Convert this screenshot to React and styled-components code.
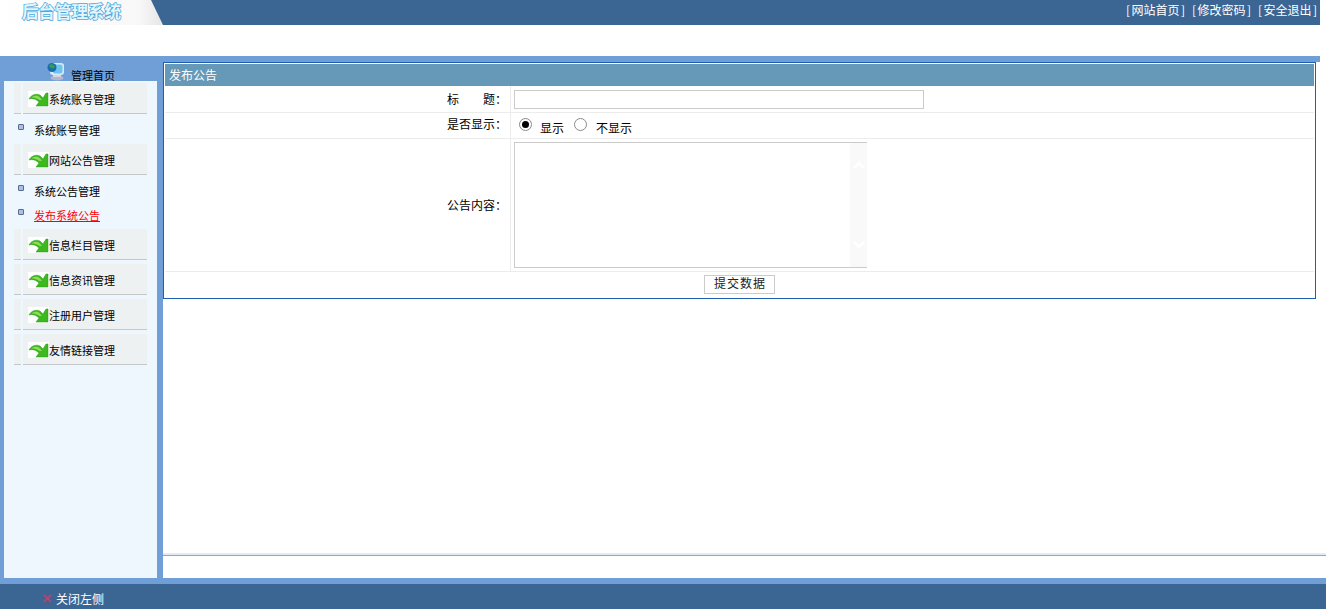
import React from 'react';
import styled, { createGlobalStyle } from 'styled-components';

const Global = createGlobalStyle`
  html, body { margin: 0; padding: 0; background: #fff; }
  body { font-family: "Noto Sans CJK SC", "Liberation Sans", sans-serif; font-size: 12px; color: #000; }
  #root { width: 1326px; height: 609px; overflow: hidden; }
`;

const Page = styled.div`
  width: 1326px;
  height: 609px;
  display: flex;
  flex-direction: column;
  background: #fff;
`;
const TopBar = styled.header`
  width: 1320px;
  height: 25px;
  background: #3b6693;
  display: flex;
  justify-content: space-between;
  align-items: center;
  flex: none;
`;
const LogoPlate = styled.div`
  width: 163px;
  height: 25px;
  background: linear-gradient(90deg, #ffffff 0%, #f8f8f8 85%, #e6e6e6 100%);
  clip-path: polygon(0 0, 151px 0, 163px 25px, 0 25px);
  display: flex;
  align-items: center;
  padding-left: 22px;
  box-sizing: border-box;
`;
const LogoText = styled.span`
  font-size: 16.5px;
  font-weight: 700;
  line-height: 22px;
  margin-top: -4px;
  color: #e4f5fd;
  -webkit-text-stroke: 1.5px #4aa8dc;
  paint-order: stroke;
  white-space: nowrap;
`;
const TopLinks = styled.nav`
  display: flex;
  gap: 7px;
  padding-right: 3px;
  color: #fff;
  font-size: 12px;
  line-height: 20px;
  margin-top: -6px;
`;
const TopLink = styled.a`
  display: flex;
  justify-content: space-between;
  width: 59px;
`;
const Spacer = styled.div`
  height: 31px;
  flex: none;
`;
const Strip = styled.div`
  width: 1320px;
  height: 6px;
  background: #6f9fd6;
  flex: none;
`;
const Frame = styled.div`
  flex: 1;
  display: flex;
  min-height: 0;
`;
const Side = styled.aside`
  width: 163px;
  flex: none;
  display: flex;
  flex-direction: column;
  background: #6f9fd6;
`;
const HomeRow = styled.div`
  height: 19px;
  display: flex;
  align-items: flex-start;
  padding-left: 47px;
  gap: 6px;
  flex: none;
`;
const HomeLabel = styled.span`
  line-height: 13px;
  margin-top: 7px;
  font-size: 11px;
`;
const SidePanel = styled.div`
  flex: 1;
  margin: 0 6px 0 4px;
  background: #eef6fe;
`;
const MenuHead = styled.div`
  margin: ${p => p.$top}px 10px 0 10px;
  height: 31px;
  display: flex;
  gap: 2px;
  box-sizing: border-box;
`;
const MenuNotch = styled.div`
  width: 7px;
  background: #edf1f2;
  border-bottom: 1px solid #c4c8ca;
`;
const MenuBody = styled.div`
  flex: 1;
  background: #edf1f2;
  border-bottom: 1px solid #c4c8ca;
  display: flex;
  align-items: center;
  padding: 1px 0 0 5px;
  font-size: 11px;
`;
const ArrowBox = styled.span`
  width: 21px;
  height: 16px;
  background: #fff;
  display: inline-flex;
  flex: none;
`;
const SubItem = styled.a`
  display: flex;
  align-items: flex-start;
  margin-left: 14px;
  height: 24px;
  font-size: 11px;
  line-height: 14px;
  color: ${p => (p.$active ? '#f00' : '#000')};
  text-decoration: ${p => (p.$active ? 'underline' : 'none')};
`;
const Bullet = styled.i`
  width: 6px;
  height: 6px;
  box-sizing: border-box;
  margin-top: 1px;
  margin-right: 10px;
  border-radius: 1px;
  border: 1px solid #5b6b86;
  background: #a9bfee;
  flex: none;
`;
const SubList = styled.div`
  padding-top: 9px;
`;
const Content = styled.main`
  flex: 1;
  background: #fff;
  display: flex;
  flex-direction: column;
  min-width: 0;
`;
const Box = styled.section`
  margin-right: 10px;
  border: 1px solid #1e5fb4;
  height: 237px;
  box-sizing: border-box;
  padding: 1px;
  display: flex;
  flex-direction: column;
  flex: none;
`;
const BoxTitle = styled.div`
  height: 22px;
  background: #6699b8;
  color: #fff;
  font-size: 12px;
  line-height: 22px;
  padding-left: 4px;
  flex: none;
`;
const Row = styled.div`
  height: ${p => p.$h}px;
  display: flex;
  border-bottom: 1px solid #ececec;
  flex: none;
  box-sizing: border-box;
`;
const Label = styled.div`
  width: 346px;
  padding: 0 3px ${p => p.$lift || 0}px 0;
  box-sizing: border-box;
  font-size: 12px;
  line-height: 1;
  border-right: 1px solid #ececec;
  display: flex;
  align-items: center;
  justify-content: flex-end;
  white-space: pre;
  flex: none;
`;
const Value = styled.div`
  flex: 1;
  padding-left: 3px;
  display: flex;
  align-items: center;
`;
const TitleInput = styled.input`
  width: 410px;
  height: 19px;
  box-sizing: border-box;
  border: 1px solid #cbcbcb;
  padding: 0;
  background: #fff;
`;
const RadioWrap = styled.span`
  display: inline-flex;
  align-items: center;
  gap: ${p => p.$gap}px;
  margin-left: ${p => p.$left}px;
  font-size: 12px;
`;
const RadioDot = styled.span`
  width: 13px;
  height: 13px;
  box-sizing: border-box;
  border-radius: 50%;
  border: 1px solid #8a8a8a;
  background: #fff;
  display: inline-flex;
  align-items: center;
  justify-content: center;
  margin-top: -3px;
  &::after {
    content: '';
    width: 7px;
    height: 7px;
    border-radius: 50%;
    background: ${p => (p.$on ? '#000' : 'transparent')};
  }
`;
const RadioLabel = styled.span`
  line-height: 16px;
  margin-top: 4px;
`;
const AreaBox = styled.div`
  width: 353px;
  height: 126px;
  box-sizing: border-box;
  border-top: 1px solid #cbcbcb;
  border-bottom: 1px solid #cbcbcb;
  border-left: 1px solid #cbcbcb;
  display: flex;
  background: #fff;
`;
const AreaFill = styled.div`
  flex: 1;
`;
const ScrollTrack = styled.div`
  width: 17px;
  background: #f9f9f9;
  display: flex;
  flex-direction: column;
  justify-content: space-between;
  align-items: center;
  padding: 18px 0;
  box-sizing: border-box;
`;
const ButtonRow = styled.div`
  flex: 1;
  display: flex;
  justify-content: center;
  align-items: center;
  padding-right: 1px;
`;
const Submit = styled.button`
  width: 71px;
  height: 19px;
  box-sizing: border-box;
  border: 1px solid #cbcbcb;
  background: #fff;
  font: 12px/1 "Noto Sans CJK SC", sans-serif;
  letter-spacing: 1px;
  padding: 0 0 3px 2px;
  color: #222;
`;
const ContentFill = styled.div`
  flex: 1;
`;
const Rule = styled.div`
  height: 3px;
  background: linear-gradient(#e2ecf6 0 2px, #a0a4a8 2px 3px);
  margin-bottom: 22px;
  flex: none;
`;
const BottomBand = styled.div`
  height: 6px;
  background: #6f9fd6;
  flex: none;
`;
const BottomBar = styled.footer`
  height: 25px;
  background: #3b6693;
  color: #fff;
  display: flex;
  align-items: center;
  padding: 3px 0 0 43px;
  box-sizing: border-box;
  gap: 4px;
  flex: none;
  font-size: 12px;
`;

const Arrow = () => (
  <ArrowBox>
    <svg width="21" height="16" viewBox="0 0 21 16">
      <path d="M1 8 C3 4 8 2 12 4 L15 7 L18 2 L20 2 L20 15 L8 15 L11 11 C8 8 5 7 1 8 Z" fill="#3db81f" stroke="#2f9a1a" strokeWidth="0.5" />
      <path d="M3.5 6.5 C6 4.5 9 4 11.5 6 L14 9 L11.5 9 C9 7 6 6.5 3.5 6.5 Z" fill="#8fdc5c" />
    </svg>
  </ArrowBox>
);

const Monitor = () => (
  <svg width="18" height="19" viewBox="0 0 18 19">
    <ellipse cx="10" cy="16" rx="6.5" ry="2.5" fill="#b4b6cc" />
    <rect x="6" y="12" width="8" height="3" fill="#d5d8e4" />
    <rect x="3" y="1" width="14" height="12" rx="3" fill="#dbe9f4" />
    <rect x="6" y="2.5" width="9.5" height="9" rx="2" fill="#6cc4f0" />
    <circle cx="5" cy="5.5" r="4.5" fill="#1a6cb0" />
    <path d="M2 3 C4 1.5 7 2 8 5 C6 7.5 3 6.5 2 3 Z" fill="#35a04a" />
  </svg>
);

const Chevron = ({ up }) => (
  <svg width="12" height="8" viewBox="0 0 12 8">
    <path d={up ? 'M1 7 L6 2 L11 7' : 'M1 1 L6 6 L11 1'} fill="none" stroke="#fff" strokeWidth="3" />
  </svg>
);

const Menu = ({ children, top }) => (
  <MenuHead $top={top}>
    <MenuNotch />
    <MenuBody>
      <Arrow />
      {children}
    </MenuBody>
  </MenuHead>
);

const Sub = ({ children, active }) => (
  <SubItem $active={active}>
    <Bullet />
    {children}
  </SubItem>
);

const Link = ({ children }) => (
  <TopLink>
    <span>[</span>
    <span>{children}</span>
    <span>]</span>
  </TopLink>
);

export default function App() {
  return (
    <Page>
      <Global />
      <TopBar>
        <LogoPlate>
          <LogoText>后台管理系统</LogoText>
        </LogoPlate>
        <TopLinks>
          <Link>网站首页</Link>
          <Link>修改密码</Link>
          <Link>安全退出</Link>
        </TopLinks>
      </TopBar>
      <Spacer />
      <Strip />
      <Frame>
        <Side>
          <HomeRow>
            <Monitor />
            <HomeLabel>管理首页</HomeLabel>
          </HomeRow>
          <SidePanel>
            <Menu top={2}>系统账号管理</Menu>
            <SubList>
              <Sub>系统账号管理</Sub>
            </SubList>
            <Menu top={-3}>网站公告管理</Menu>
            <SubList>
              <Sub>系统公告管理</Sub>
              <Sub active>发布系统公告</Sub>
            </SubList>
            <Menu top={-3}>信息栏目管理</Menu>
            <Menu top={4}>信息资讯管理</Menu>
            <Menu top={4}>注册用户管理</Menu>
            <Menu top={4}>友情链接管理</Menu>
          </SidePanel>
        </Side>
        <Content>
          <Box>
            <BoxTitle>发布公告</BoxTitle>
            <Row $h={27}>
              <Label>标{'\u3000\u3000'}题：</Label>
              <Value><TitleInput /></Value>
            </Row>
            <Row $h={26}>
              <Label $lift={3}>是否显示：</Label>
              <Value>
                <RadioWrap $left={5} $gap={8}><RadioDot $on /><RadioLabel>显示</RadioLabel></RadioWrap>
                <RadioWrap $left={10} $gap={9}><RadioDot /><RadioLabel>不显示</RadioLabel></RadioWrap>
              </Value>
            </Row>
            <Row $h={133}>
              <Label>公告内容：</Label>
              <Value>
                <AreaBox>
                  <AreaFill />
                  <ScrollTrack>
                    <Chevron up />
                    <Chevron />
                  </ScrollTrack>
                </AreaBox>
              </Value>
            </Row>
            <ButtonRow><Submit>提交数据</Submit></ButtonRow>
          </Box>
          <ContentFill />
          <Rule />
        </Content>
      </Frame>
      <BottomBand />
      <BottomBar>
        <svg width="9" height="9" viewBox="0 0 9 9">
          <path d="M1 1 L8 8 M8 1 L1 8" stroke="#f0305a" strokeWidth="1.4" />
        </svg>
        <span>关闭左侧</span>
      </BottomBar>
    </Page>
  );
}
